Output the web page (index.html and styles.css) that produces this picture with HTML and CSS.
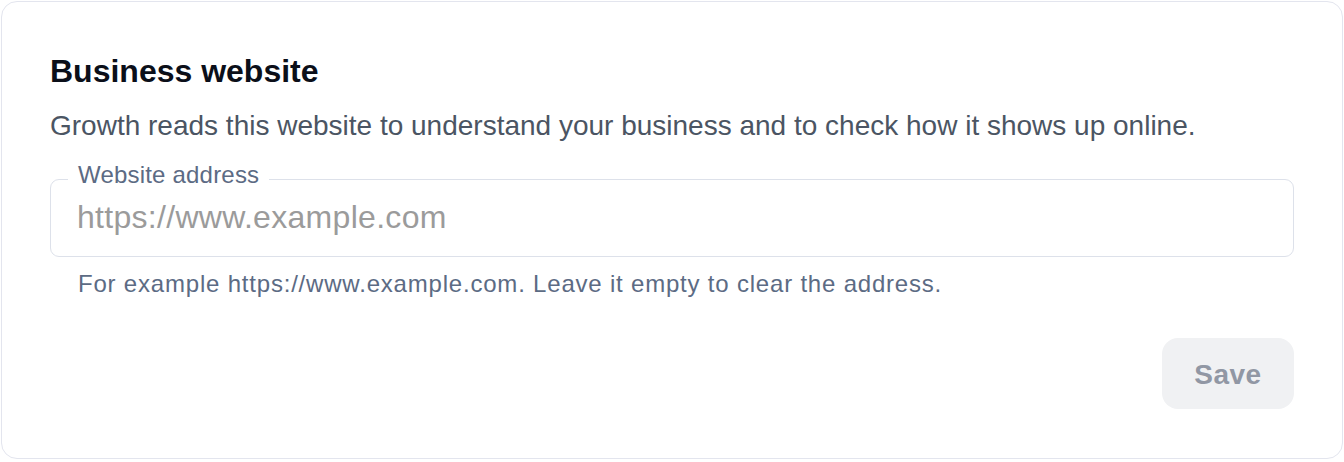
FILE: index.html
```html
<!DOCTYPE html>
<html lang="en">
<head>
<meta charset="utf-8">
<title>Business website</title>
<link rel="stylesheet" href="styles.css">
</head>
<body>
<div class="page">
  <section class="card">
    <h2 class="title">Business website</h2>
    <p class="desc">Growth reads this website to understand your business and to check how it shows up online.</p>
    <div class="field">
      <label class="field-label" for="site">Website address</label>
      <input id="site" class="field-input" type="text" placeholder="https://www.example.com">
    </div>
    <p class="helper">For example https://www.example.com. Leave it empty to clear the address.</p>
    <div class="actions">
      <button class="save" type="button" disabled>Save</button>
    </div>
  </section>
</div>
</body>
</html>
```

FILE: styles.css
```css
html, body {
  margin: 0;
  padding: 0;
  background: #ffffff;
}

body {
  font-family: "Liberation Sans", Arial, Helvetica, sans-serif;
}

.page {
  padding: 1px;
  height: 462px;
  box-sizing: border-box;
}

.card {
  box-sizing: border-box;
  height: 458px;
  border: 1px solid #e3e5ee;
  border-radius: 16px;
  padding: 50px 48px 0 48px;
  background: #ffffff;
}

.title {
  margin: 0;
  font-size: 32px;
  line-height: 38px;
  font-weight: 700;
  color: #0b0f19;
}

.desc {
  margin: 16px 0 0;
  font-size: 28px;
  line-height: 40px;
  color: #4b5563;
}

.field {
  position: relative;
  margin-top: 33px;
  height: 78px;
  box-sizing: border-box;
  border: 1px solid #dde1ea;
  border-radius: 9px;
}

.field-label {
  position: absolute;
  left: 17px;
  top: -17px;
  padding: 0 10px;
  background: #ffffff;
  font-size: 24px;
  line-height: 24px;
  letter-spacing: 0.2px;
  color: #5c6b84;
}

.field-input {
  display: block;
  box-sizing: border-box;
  width: 100%;
  height: 100%;
  margin: 0;
  border: none;
  outline: none;
  background: transparent;
  padding: 0 26px 2px 26px;
  font-family: "Liberation Sans", Arial, Helvetica, sans-serif;
  font-size: 32px;
  letter-spacing: 0.3px;
  color: #111827;
  border-radius: 9px;
}

.field-input::placeholder {
  color: #9b9b9b;
  opacity: 1;
}

.helper {
  margin: 15px 0 0;
  padding-left: 28px;
  font-size: 24px;
  line-height: 24px;
  letter-spacing: 0.8px;
  color: #5c6b84;
}

.actions {
  display: flex;
  justify-content: flex-end;
  margin-top: 42px;
}

.save {
  width: 132px;
  height: 71px;
  box-sizing: border-box;
  padding: 3px 0 0;
  border: none;
  border-radius: 16px;
  background: #f0f1f3;
  color: #9197a4;
  font-family: "Liberation Sans", Arial, Helvetica, sans-serif;
  font-size: 28px;
  line-height: 68px;
  font-weight: 700;
  letter-spacing: 0.5px;
  text-align: center;
}
```
